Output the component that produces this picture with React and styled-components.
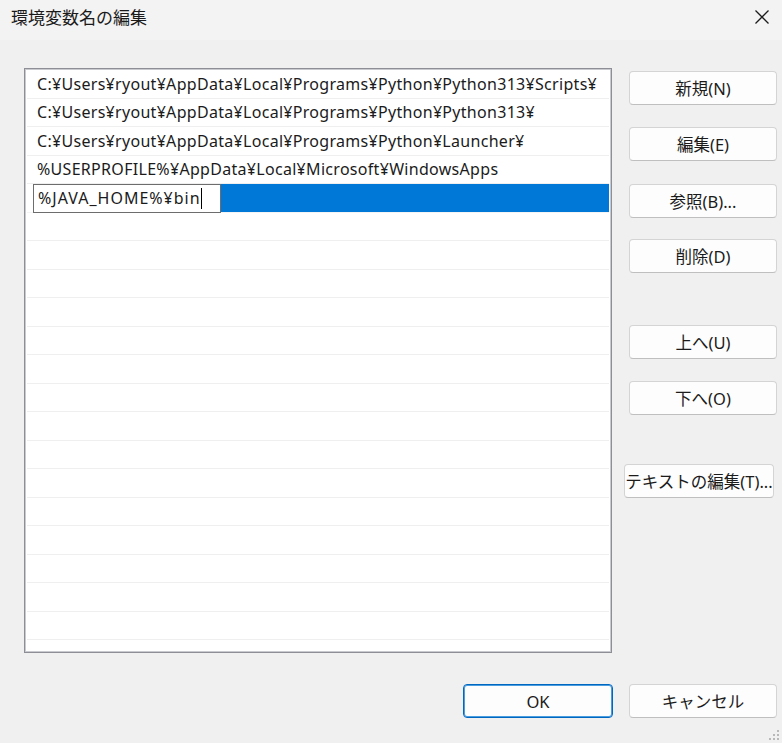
import React from "react";
import styled, { createGlobalStyle } from "styled-components";

const Global = createGlobalStyle`
  html, body { margin: 0; padding: 0; background: #f0f0f0; }
  body { font-family: "Noto Sans", "Noto Sans CJK JP", sans-serif; color: #1b1b1b; }
`;

const Window = styled.div`
  width: 782px;
  height: 743px;
  background: #f0f0f0;
  display: flex;
  flex-direction: column;
  position: relative;
  overflow: hidden;
`;

const TitleBar = styled.div`
  height: 40px;
  background: #f3f3f3;
  display: flex;
  align-items: center;
  justify-content: space-between;
  padding: 0 10px 7px 11px;
  box-sizing: border-box;
`;

const Title = styled.div`
  font-family: "Noto Sans CJK JP", sans-serif;
  font-size: 17px;
  color: #1a1a1a;
`;

const CloseBtn = styled.div`
  width: 20px;
  height: 20px;
  display: flex;
  align-items: center;
  justify-content: center;
`;

const Body = styled.div`
  display: flex;
  padding: 28px 0 0 24px;
  gap: 17px;
`;

const ListBox = styled.div`
  width: 588px;
  height: 585px;
  box-sizing: border-box;
  border: 1px solid #8e8f96;
  box-shadow: inset 0 0 0 1px #c9cad0;
  background: #fff;
  padding: 1px 2px 1px 1px;
  overflow: hidden;
`;

const Row = styled.div`
  height: 28.5px;
  box-sizing: border-box;
  border-bottom: 1px solid #efefef;
  margin-left: 1px;
  padding-left: 10px;
  display: flex;
  align-items: center;
  font-size: 16px;
  letter-spacing: 0.3px;
  color: #1b1b1b;
  white-space: nowrap;
`;

const SelectedRow = styled(Row)`
  padding-left: 6px;
  border-bottom-color: #f4f4f4;
`;

const Highlight = styled.div`
  flex: 1;
  height: 100%;
  background: #0078d7;
  display: flex;
  align-items: stretch;
`;

const EditBox = styled.div`
  width: 188px;
  box-sizing: border-box;
  background: #fff;
  border: 1px solid #6d6d6d;
  margin-bottom: -1px;
  padding-left: 4px;
  display: flex;
  align-items: center;
  font-size: 16px;
  letter-spacing: 1px;
  color: #1b1b1b;
`;

const Caret = styled.span`
  display: inline-block;
  width: 1px;
  height: 21px;
  background: #000;
  margin-left: 0;
`;

const ButtonColumn = styled.div`
  display: flex;
  flex-direction: column;
  padding-top: 3px;
`;

const Button = styled.button`
  width: ${(p) => p.$w || 148}px;
  height: 34px;
  margin-top: ${(p) => p.$mt || 0}px;
  margin-left: ${(p) => p.$ml || 0}px;
  box-sizing: border-box;
  background: #fdfdfd;
  border: 1px solid ${(p) => (p.$primary ? "#0067c0" : "#d4d4d4")};
  border-bottom-color: ${(p) => (p.$primary ? "#0067c0" : "#bfbfbf")};
  box-shadow: ${(p) => (p.$primary ? "inset 0 0 0 1px #4a9ee0" : "none")};
  border-radius: 4px;
  font-family: "Noto Sans", "Noto Sans CJK JP", sans-serif;
  font-size: 16.5px;
  color: #1b1b1b;
  padding: 0;
  white-space: nowrap;
  display: flex;
  align-items: center;
  justify-content: center;
`;

const Footer = styled.div`
  display: flex;
  justify-content: flex-end;
  gap: 16px;
  padding: 31px 5px 0 0;
`;

const Grip = styled.svg`
  position: absolute;
  right: 2px;
  bottom: 2px;
`;

const paths = [
  "C:¥Users¥ryout¥AppData¥Local¥Programs¥Python¥Python313¥Scripts¥",
  "C:¥Users¥ryout¥AppData¥Local¥Programs¥Python¥Python313¥",
  "C:¥Users¥ryout¥AppData¥Local¥Programs¥Python¥Launcher¥",
  "%USERPROFILE%¥AppData¥Local¥Microsoft¥WindowsApps",
];

export default function App() {
  const empties = Array.from({ length: 16 });
  return (
    <Window>
      <Global />
      <TitleBar>
        <Title>環境変数名の編集</Title>
        <CloseBtn>
          <svg width="16" height="16" viewBox="0 0 16 16">
            <path d="M1.5 1.5 L14.5 14.5 M14.5 1.5 L1.5 14.5" stroke="#1b1b1b" strokeWidth="1.3" fill="none" />
          </svg>
        </CloseBtn>
      </TitleBar>
      <Body>
        <ListBox>
          {paths.map((p) => (
            <Row key={p}>{p}</Row>
          ))}
          <SelectedRow>
            <Highlight>
              <EditBox>
                %JAVA_HOME%¥bin
                <Caret />
              </EditBox>
            </Highlight>
          </SelectedRow>
          {empties.map((_, i) => (
            <Row key={i} />
          ))}
        </ListBox>
        <ButtonColumn>
          <Button>新規(N)</Button>
          <Button $mt={22}>編集(E)</Button>
          <Button $mt={23}>参照(B)...</Button>
          <Button $mt={21}>削除(D)</Button>
          <Button $mt={52}>上へ(U)</Button>
          <Button $mt={22}>下へ(O)</Button>
          <Button $mt={49} $ml={-5} $w={150}>テキストの編集(T)...</Button>
        </ButtonColumn>
      </Body>
      <Footer>
        <Button $primary $w={150}>OK</Button>
        <Button>キャンセル</Button>
      </Footer>
      <Grip width="12" height="12" viewBox="0 0 12 12">
        {[
          [9, 1], [9, 5], [5, 5], [9, 9], [5, 9], [1, 9],
        ].map(([x, y]) => (
          <rect key={`${x}-${y}`} x={x} y={y} width="2" height="2" fill="#b8b8b8" />
        ))}
      </Grip>
    </Window>
  );
}
